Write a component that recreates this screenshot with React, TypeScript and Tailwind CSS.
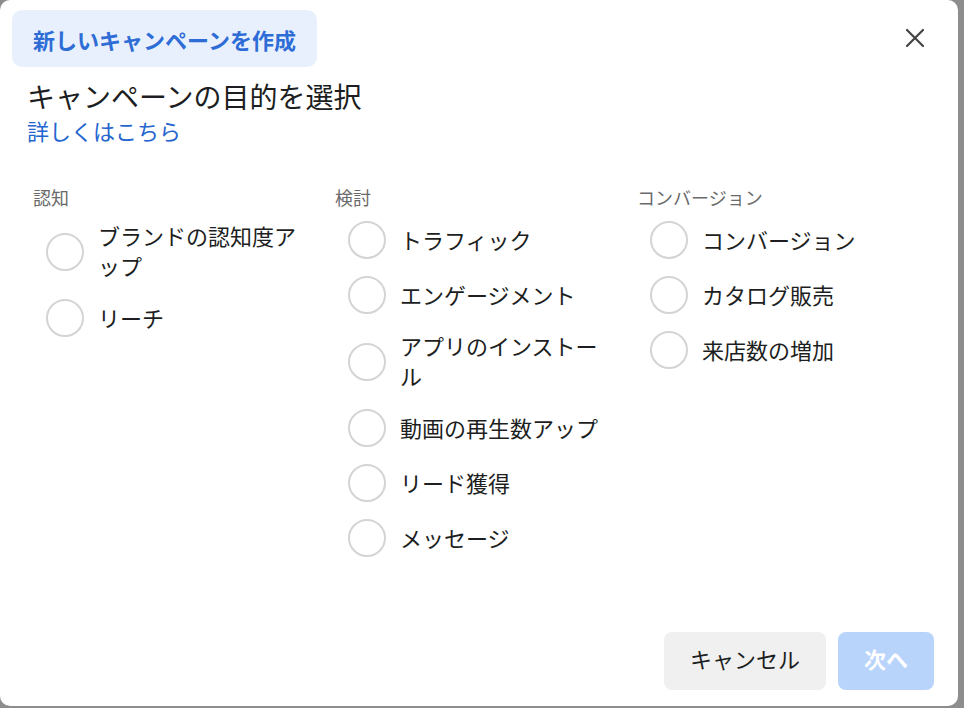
import React from "react"

const groups = [
  {
    title: "認知",
    items: ["ブランドの認知度アップ", "リーチ"],
  },
  {
    title: "検討",
    items: [
      "トラフィック",
      "エンゲージメント",
      "アプリのインストール",
      "動画の再生数アップ",
      "リード獲得",
      "メッセージ",
    ],
  },
  {
    title: "コンバージョン",
    items: ["コンバージョン", "カタログ販売", "来店数の増加"],
  },
]

function Radio() {
  return <span className="block w-[38px] h-[38px] shrink-0 rounded-full border-2 border-[#d4d4d4] bg-white" />
}

export default function App() {
  return (
    <div
      className="w-[964px] h-[708px] bg-[#8d8d8d] overflow-hidden"
      style={{ fontFamily: '"Noto Sans CJK JP", "Noto Sans", sans-serif' }}
    >
      <div className="w-[958px] h-[706px] bg-white rounded-[10px] flex flex-col">
        <div className="flex items-start justify-between">
          <div className="ml-[12px] mt-[10px] h-[57px] px-[21px] flex items-center rounded-[10px] bg-[#e8f0fd] text-[22px] font-bold text-[#2e6cd6] leading-none">
            新しいキャンペーンを作成
          </div>
          <button className="mt-[28px] mr-[33px] w-[20px] h-[20px] text-[#444]">
            <svg viewBox="0 0 20 20" className="w-[20px] h-[20px]" fill="none" stroke="currentColor" strokeWidth="2.2" strokeLinecap="round">
              <path d="M2 2 L18 18 M18 2 L2 18" />
            </svg>
          </button>
        </div>

        <div className="pl-[27px] mt-[12px]">
          <h1 className="text-[28px] leading-[34px] text-[#1c1e21] font-normal">キャンペーンの目的を選択</h1>
          <a className="block mt-[3px] text-[22px] leading-[28px] text-[#2565cf]">詳しくはこちら</a>
        </div>

        <div className="mt-[41px] pl-[33px] grid grid-cols-[302px_302px_300px]">
          {groups.map((g) => (
            <div key={g.title} className="flex flex-col">
              <div className="text-[18px] leading-[24px] text-[#6a6a6a]">{g.title}</div>
              <div className="mt-[11px] pl-[13px] flex flex-col gap-[15px]">
                {g.items.map((item) => (
                  <label key={item} className="flex items-center gap-[14px] min-h-[40px]">
                    <Radio />
                    <span className="w-[212px] mb-[3px] text-[22px] leading-[30px] text-[#1c1e21]">{item}</span>
                  </label>
                ))}
              </div>
            </div>
          ))}
        </div>

        <div className="flex-1" />

        <div className="flex justify-end gap-[12px] pr-[24px] pb-[16px]">
          <button className="w-[162px] h-[58px] pb-[5px] rounded-[8px] bg-[#f0f0f0] text-[22px] text-[#1c1e21]">
            キャンセル
          </button>
          <button className="w-[96px] h-[58px] pb-[5px] rounded-[8px] bg-[#b9d4fb] text-[22px] font-semibold text-white">
            次へ
          </button>
        </div>
      </div>
    </div>
  )
}
